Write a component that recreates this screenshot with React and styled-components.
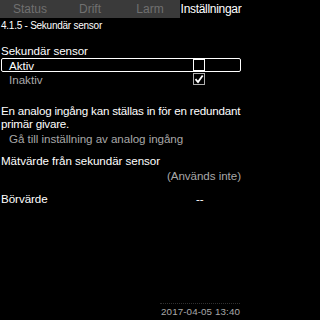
import React from "react";
import styled, { createGlobalStyle } from "styled-components";

const Global = createGlobalStyle`
  html, body { margin: 0; padding: 0; background: #000; }
  body { width: 242px; height: 320px; overflow: hidden; font-family: "Liberation Sans", Arial, sans-serif; }
`;

const Screen = styled.div`
  width: 242px;
  height: 320px;
  background: #000;
  color: #fff;
  display: flex;
  flex-direction: column;
`;

const TabBar = styled.div`
  display: flex;
  height: 18px;
  background: #3a3a3a;
`;

const Tab = styled.div`
  flex: ${(p) => (p.$active ? "0 0 62px" : "0 0 60px")};
  display: flex;
  align-items: center;
  justify-content: center;
  font-size: 12px;
  color: ${(p) => (p.$active ? "#fff" : "#707070")};
  background: ${(p) => (p.$active ? "#000" : "transparent")};
  letter-spacing: ${(p) => (p.$active ? "-0.3px" : "0")};
`;

const Crumb = styled.div`
  font-size: 10px;
  line-height: 12px;
  letter-spacing: -0.25px;
  padding: 2px 0 0 1px;
  box-sizing: border-box;
  height: 26px;
`;

const Label = styled.div`
  display: flex;
  justify-content: ${(p) => (p.$right ? "flex-end" : "space-between")};
  font-size: 11.6px;
  line-height: 14px;
  letter-spacing: -0.05px;
  padding: ${(p) => p.$pad || "0 0 0 1px"};
  color: ${(p) => (p.$muted ? "#a8a8a8" : "#fff")};
  white-space: nowrap;
`;

const Value = styled.span`
  width: 46px;
  text-align: left;
`;

const Options = styled.div`
  display: flex;
  flex-direction: column;
`;

const OptionRow = styled.div`
  display: flex;
  align-items: center;
  justify-content: space-between;
  height: 12px;
  margin: 0 1px;
  padding: 0 35px 0 7px;
  border: 1px solid ${(p) => (p.$selected ? "#fff" : "transparent")};
  border-radius: 2px;
  font-size: 11.6px;
  color: ${(p) => (p.$selected ? "#fff" : "#a8a8a8")};
`;

const Box = styled.div`
  width: 10px;
  height: 10px;
  border: 1px solid ${(p) => (p.$checked ? "#b0b0b0" : "#fff")};
  display: flex;
  align-items: center;
  justify-content: center;
`;

const Paragraph = styled.div`
  font-size: 11.6px;
  line-height: 13px;
  margin-top: 18px;
  letter-spacing: -0.2px;
  padding-left: 1px;
  white-space: nowrap;
`;

const Spacer = styled.div`
  flex: 1;
`;

const Footer = styled.div`
  display: flex;
  flex-direction: column;
  align-items: flex-end;
  padding: 0 2px 3px 0;
`;

const Dots = styled.div`
  width: 80px;
  height: 0;
  border-top: 1px dotted #2e2e2e;
  margin-bottom: 2px;
`;

const DateText = styled.div`
  font-size: 9.8px;
  line-height: 11px;
  color: #a8a8a8;
  letter-spacing: 0.1px;
`;

function Check() {
  return (
    <svg width="10" height="10" viewBox="0 0 10 10">
      <path d="M1.5 5.2 L4 8 L8.7 1.5" stroke="#fff" strokeWidth="1.8" fill="none" />
    </svg>
  );
}

export default function App() {
  return (
    <>
      <Global />
      <Screen>
        <TabBar>
          <Tab>Status</Tab>
          <Tab>Drift</Tab>
          <Tab>Larm</Tab>
          <Tab $active>Inställningar</Tab>
        </TabBar>
        <Crumb>4.1.5 - Sekundär sensor</Crumb>
        <Options>
          <Label>Sekundär sensor</Label>
          <OptionRow $selected>
            Aktiv
            <Box />
          </OptionRow>
          <OptionRow>
            Inaktiv
            <Box $checked>
              <Check />
            </Box>
          </OptionRow>
        </Options>
        <Paragraph>
          En analog ingång kan ställas in för en redundant
          <br />
          primär givare.
        </Paragraph>
        <Label $muted $pad="2px 0 0 9px">Gå till inställning av analog ingång</Label>
        <Label $pad="8px 0 0 1px">Mätvärde från sekundär sensor</Label>
        <Label $muted $right $pad="1px 1px 0 0">(Används inte)</Label>
        <Label $pad="9px 0 0 1px">
          <span>Börvärde</span>
          <Value>--</Value>
        </Label>
        <Spacer />
        <Footer>
          <Dots />
          <DateText>2017-04-05 13:40</DateText>
        </Footer>
      </Screen>
    </>
  );
}
